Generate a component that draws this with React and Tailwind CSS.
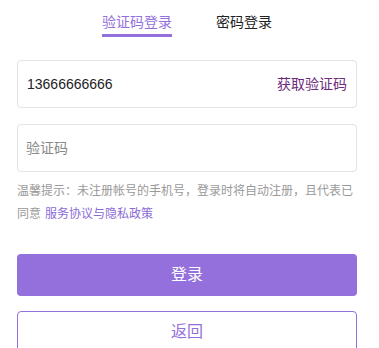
import React, { useState } from 'react';

const FONT = { fontFamily: '"Liberation Sans", "Noto Sans CJK SC", sans-serif' };

export default function App() {
  const [tab, setTab] = useState('code');
  const [phone, setPhone] = useState('13666666666');
  const [code, setCode] = useState('');

  return (
    <div className="w-[379px] h-[348px] bg-white overflow-hidden" style={FONT}>
      <div className="w-[340px] ml-[17px]">
        <div className="flex justify-center gap-[44px] pt-[12px]">
          <button
            onClick={() => setTab('code')}
            className={`flex flex-col items-center text-[14px] leading-[20px] ${tab === 'code' ? 'text-[#9370db]' : 'text-[#222]'}`}
          >
            <span>验证码登录</span>
            <span className={`mt-[2px] h-[3px] w-full ${tab === 'code' ? 'bg-[#9370db]' : 'bg-transparent'}`} />
          </button>
          <button
            onClick={() => setTab('pwd')}
            className={`flex flex-col items-center text-[14px] leading-[20px] ${tab === 'pwd' ? 'text-[#9370db]' : 'text-[#222]'}`}
          >
            <span>密码登录</span>
            <span className={`mt-[2px] h-[3px] w-full ${tab === 'pwd' ? 'bg-[#9370db]' : 'bg-transparent'}`} />
          </button>
        </div>

        <div className="mt-[23px] h-[48px] flex items-center border border-[#e3e3e3] rounded-[4px] pl-[9px] pr-[9px]">
          <input
            value={phone}
            onChange={(e) => setPhone(e.target.value)}
            className="flex-1 min-w-0 outline-none text-[14px] text-[#222] bg-transparent"
          />
          <span className="text-[14px] text-[#6e2a7c] shrink-0">获取验证码</span>
        </div>

        <div className="mt-[16px] h-[48px] flex items-center border border-[#e3e3e3] rounded-[4px] pl-[8px] pr-[9px]">
          <input
            value={code}
            onChange={(e) => setCode(e.target.value)}
            placeholder="验证码"
            className="flex-1 min-w-0 outline-none text-[14px] text-[#222] placeholder:text-[#888] bg-transparent"
          />
        </div>

        <p className="mt-[8px] text-[12px] leading-[23px] text-[#999]">
          温馨提示：未注册帐号的手机号，登录时将自动注册，且代表已同意<span className="ml-[4px] text-[#8a6bd6]">服务协议与隐私政策</span>
        </p>

        <button className="mt-[28px] w-full h-[42px] rounded-[4px] bg-[#9370db] text-white text-[16px]">
          登录
        </button>
        <button className="mt-[15px] w-full h-[42px] rounded-[4px] border border-[#9370db] bg-white text-[#9370db] text-[16px]">
          返回
        </button>
      </div>
    </div>
  );
}
